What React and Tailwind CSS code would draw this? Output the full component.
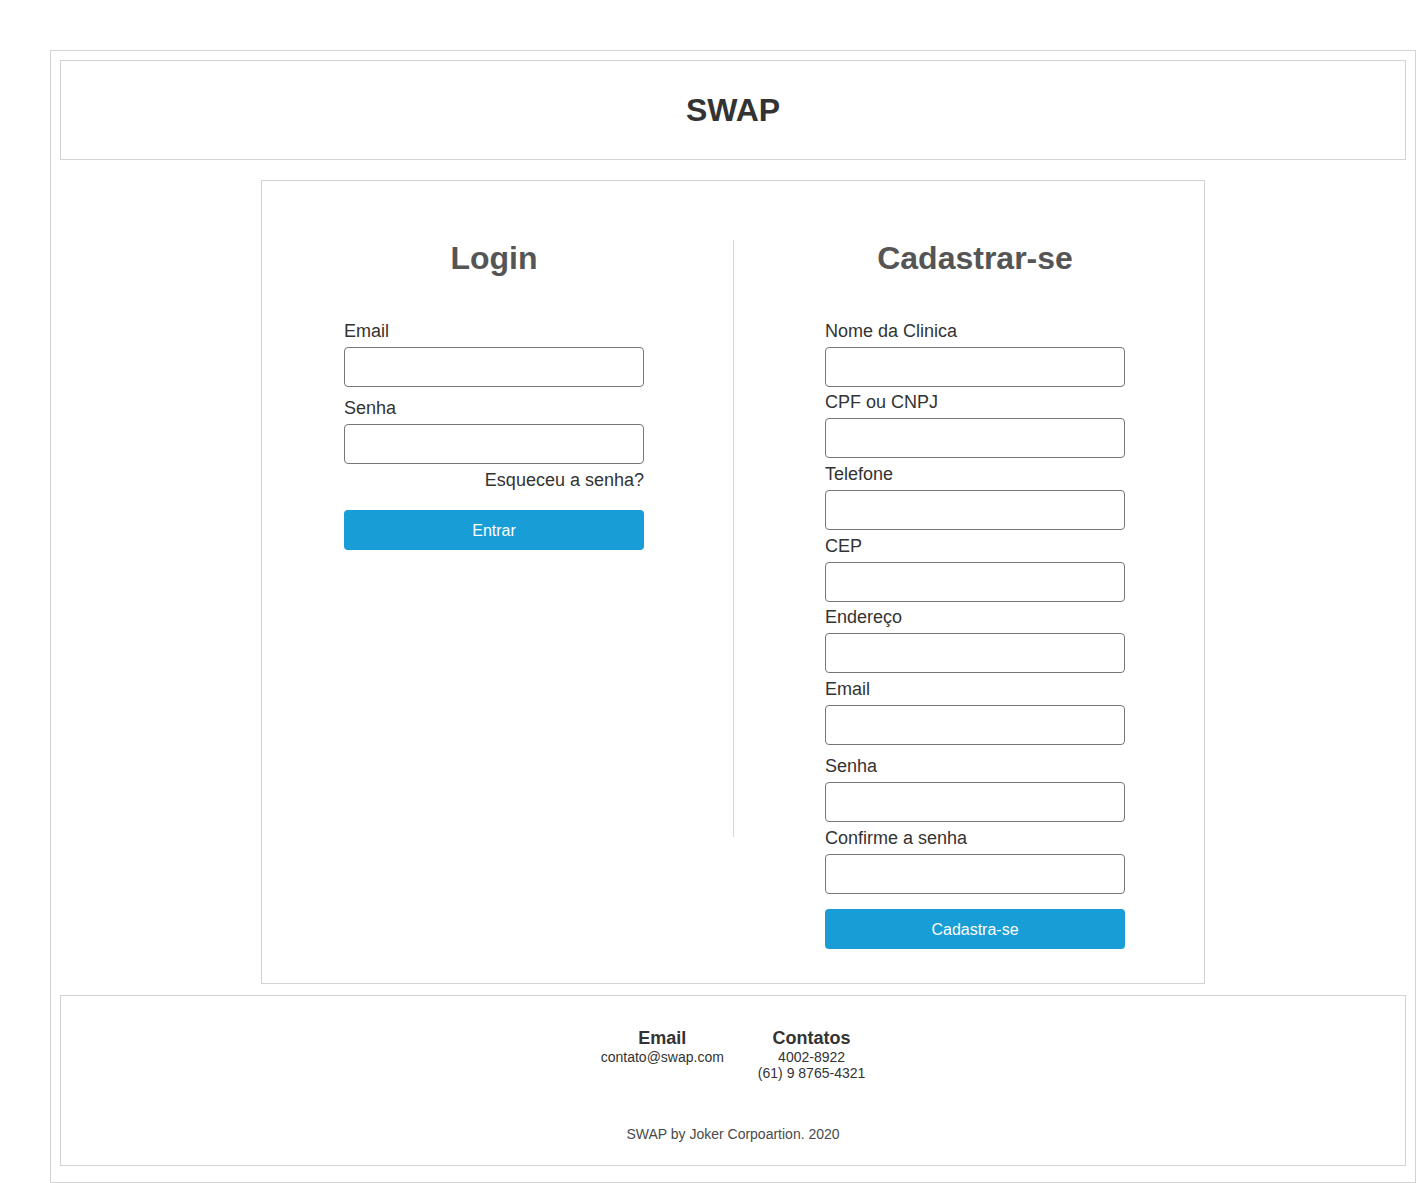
import React from "react";

const font = { fontFamily: '"Liberation Sans", Arial, sans-serif' };

function Field({ label, mt = "mt-[5px]" }) {
  return (
    <div className={mt}>
      <label className="block text-[18px] leading-[21px] text-[#333]">{label}</label>
      <input className="mt-[5px] block h-[40px] w-[300px] rounded-[4px] border border-[#767676] bg-white px-2 outline-none" />
    </div>
  );
}

export default function App() {
  const cadastro = [
    { label: "Nome da Clinica", mt: "mt-[44px]" },
    { label: "CPF ou CNPJ", mt: "mt-[5px]" },
    { label: "Telefone", mt: "mt-[6px]" },
    { label: "CEP", mt: "mt-[6px]" },
    { label: "Endereço", mt: "mt-[5px]" },
    { label: "Email", mt: "mt-[6px]" },
    { label: "Senha", mt: "mt-[11px]" },
    { label: "Confirme a senha", mt: "mt-[6px]" },
  ];

  return (
    <div style={font} className="bg-white">
      <div className="ml-[50px] mt-[50px] w-[calc(100%-50px)] border border-[#d3d3d3] px-[9px] pt-[9px] pb-[16px]">
        {/* Header */}
        <header className="flex h-[100px] items-center justify-center border border-[#d3d3d3]">
          <h1 className="text-[32px] font-bold leading-[37px] text-[#333]">SWAP</h1>
        </header>

        {/* Forms */}
        <main className="mx-auto mt-[20px] flex w-[944px] border border-[#d3d3d3] pt-[59px] pb-[34px] pl-[82px]">
          <div className="w-[300px]">
            <h2 className="text-center text-[32px] font-bold leading-[37px] text-[#555]">Login</h2>
            <Field label="Email" mt="mt-[44px]" />
            <Field label="Senha" mt="mt-[11px]" />
            <p className="mt-[6px] text-right text-[18px] leading-[21px] text-[#333]">Esqueceu a senha?</p>
            <button className="mt-[19px] h-[40px] w-[300px] rounded-[4px] bg-[#189dd6] pt-[2px] text-[16px] text-white">
              Entrar
            </button>
          </div>

          <div className="ml-[89px] h-[597px] w-px bg-[#d6d6d6]" />

          <div className="ml-[91px] w-[300px]">
            <h2 className="text-center text-[32px] font-bold leading-[37px] text-[#555]">Cadastrar-se</h2>
            {cadastro.map((f) => (
              <Field key={f.label} label={f.label} mt={f.mt} />
            ))}
            <button className="mt-[15px] h-[40px] w-[300px] rounded-[4px] bg-[#189dd6] pt-[2px] text-[16px] text-white">
              Cadastra-se
            </button>
          </div>
        </main>

        {/* Footer */}
        <footer className="mt-[11px] border border-[#d3d3d3] pt-[32px] pb-[23px]">
          <div className="flex justify-center gap-[34px] text-[#333]">
            <div className="text-center">
              <h3 className="text-[18px] font-bold leading-[21px]">Email</h3>
              <p className="text-[14px] leading-[16px]">contato@swap.com</p>
            </div>
            <div className="text-center">
              <h3 className="text-[18px] font-bold leading-[21px]">Contatos</h3>
              <p className="text-[14px] leading-[16px]">4002-8922</p>
              <p className="text-[14px] leading-[16px]">(61) 9 8765-4321</p>
            </div>
          </div>
          <p className="mt-[45px] text-center text-[14px] leading-[16px] text-[#4a4a4a]">
            SWAP by Joker Corpoartion. 2020
          </p>
        </footer>
      </div>
    </div>
  );
}
